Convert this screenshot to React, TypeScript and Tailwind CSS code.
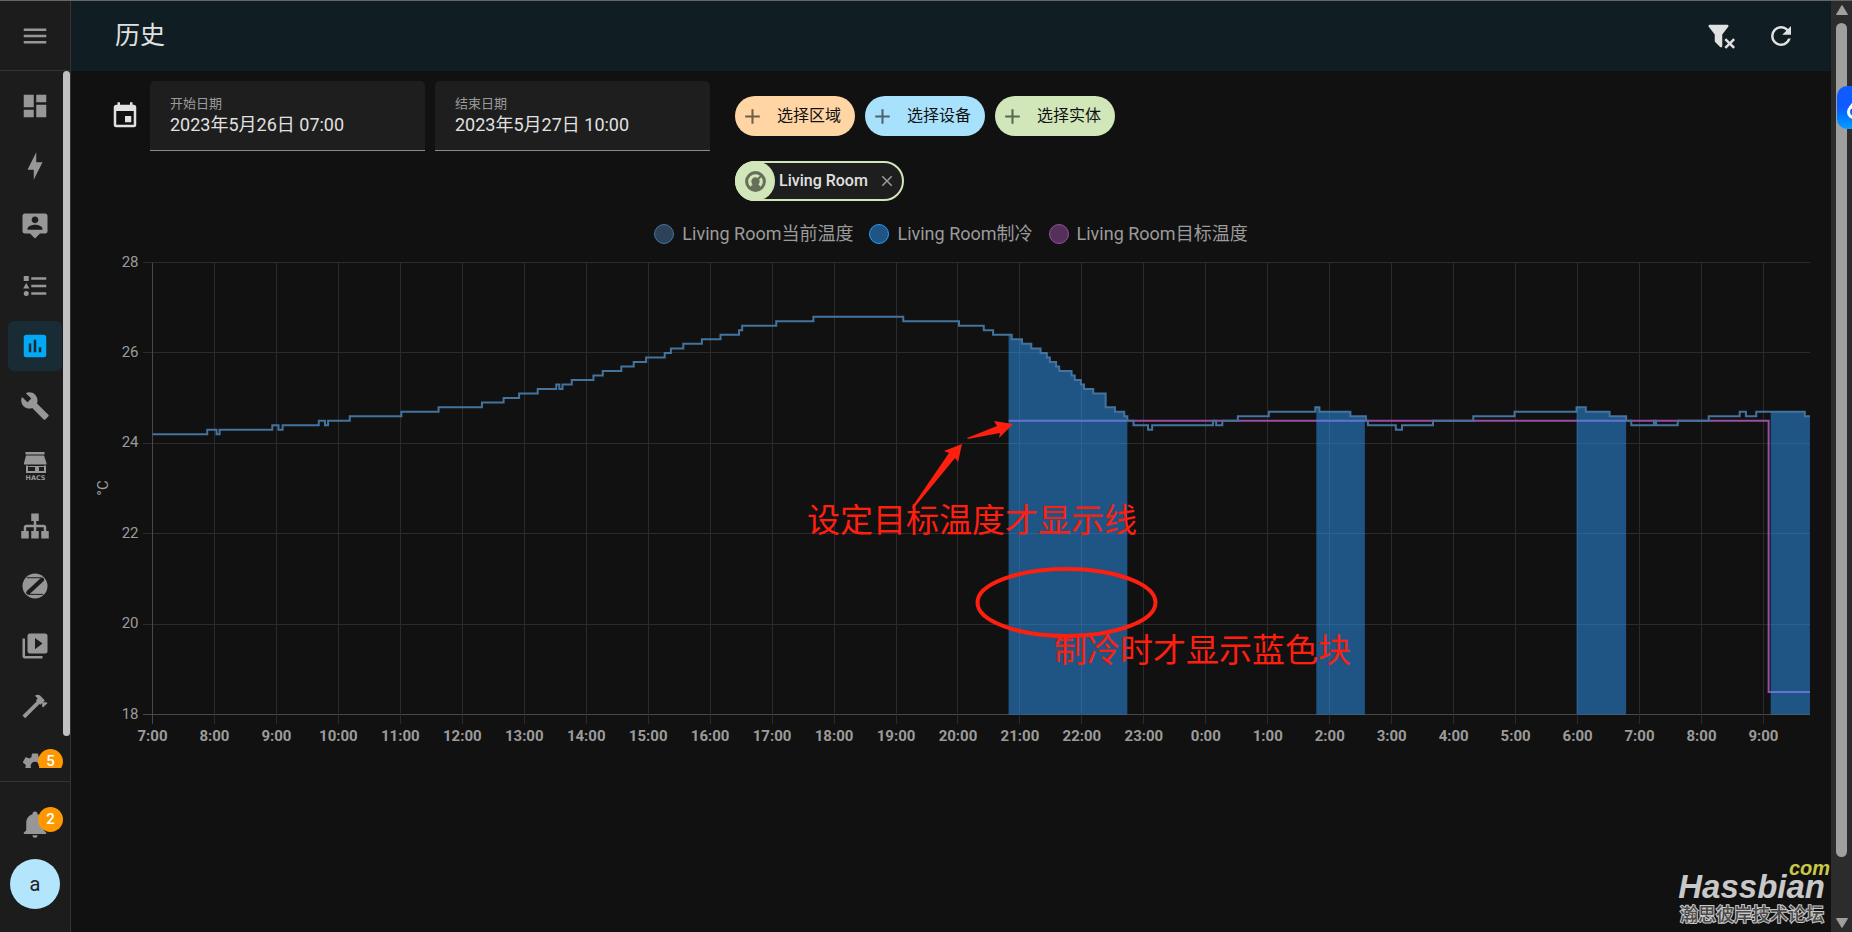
import React from 'react';

const icons = {
  menu: 'M3,6H21V8H3V6M3,11H21V13H3V11M3,16H21V18H3V16Z',
  dashboard: 'M13,3V9H21V3M13,21H21V11H13M3,21H11V15H3M3,13H11V3H3V13Z',
  energy: 'M11 15H6L13 1V9H18L11 23V15Z',
  map: 'M20,2H4A2,2 0 0,0 2,4V16A2,2 0 0,0 4,18H8L12,22L16,18H20A2,2 0 0,0 22,16V4A2,2 0 0,0 20,2M12,4.3C13.5,4.3 14.7,5.5 14.7,7C14.7,8.5 13.5,9.7 12,9.7C10.5,9.7 9.3,8.5 9.3,7C9.3,5.5 10.5,4.3 12,4.3M18,15H6V14.1C6,12.1 10,11 12,11C14,11 18,12.1 18,14.1V15Z',
  logbook: 'M5,9.5L7.5,14H2.5L5,9.5M3,4H7V8H3V4M5,20A2,2 0 0,0 7,18A2,2 0 0,0 5,16A2,2 0 0,0 3,18A2,2 0 0,0 5,20M9,5V7H21V5H9M9,19H21V17H9V19M9,13H21V11H9V13Z',
  history: 'M9,17H7V10H9V17M13,17H11V7H13V17M17,17H15V13H17V17M19,3H5C3.89,3 3,3.89 3,5V19A2,2 0 0,0 5,21H19A2,2 0 0,0 21,19V5C21,3.89 20.1,3 19,3Z',
  wrench: 'M22.7,19L13.6,9.9C14.5,7.6 14,4.9 12.1,3C10.1,1 7.1,0.6 4.7,1.7L9,6L6,9L1.6,4.7C0.4,7.1 0.9,10.1 2.9,12.1C4.8,14 7.5,14.5 9.8,13.6L18.9,22.7C19.3,23.1 19.9,23.1 20.3,22.7L22.6,20.4C23.1,20 23.1,19.3 22.7,19Z',
  sitemap: 'M9,2V8H11V11H5C3.89,11 3,11.89 3,13V16H1V22H7V16H5V13H11V16H9V22H15V16H13V13H19V16H17V22H23V16H21V13C21,11.89 20.11,11 19,11H13V8H15V2H9Z',
  media: 'M4,6H2V20A2,2 0 0,0 4,22H18V20H4V6M20,2H8A2,2 0 0,0 6,4V16A2,2 0 0,0 8,18H20A2,2 0 0,0 22,16V4A2,2 0 0,0 20,2M12,14.5V5.5L18,10L12,14.5Z',
  hammer: 'M2,19.63L13.43,8.2L12.72,7.5L14.14,6.07L12,3.89C13.2,2.7 15.09,2.7 16.27,3.89L19.87,7.5L18.45,8.91H21.29L22,9.62L18.45,13.21L17.74,12.5V9.62L16.27,11.04L15.56,10.33L4.13,21.76L2,19.63Z',
  cog: 'M12,15.5A3.5,3.5 0 0,1 8.5,12A3.5,3.5 0 0,1 12,8.5A3.5,3.5 0 0,1 15.5,12A3.5,3.5 0 0,1 12,15.5M19.43,12.97C19.47,12.65 19.5,12.33 19.5,12C19.5,11.67 19.47,11.34 19.43,11L21.54,9.37C21.73,9.22 21.78,8.95 21.66,8.73L19.66,5.27C19.54,5.05 19.27,4.96 19.05,5.05L16.56,6.05C16.04,5.66 15.5,5.32 14.87,5.07L14.5,2.42C14.46,2.18 14.25,2 14,2H10C9.75,2 9.54,2.18 9.5,2.42L9.13,5.07C8.5,5.32 7.96,5.66 7.44,6.05L4.95,5.05C4.73,4.96 4.46,5.05 4.34,5.27L2.34,8.73C2.21,8.95 2.27,9.22 2.46,9.37L4.57,11C4.53,11.34 4.5,11.67 4.5,12C4.5,12.33 4.53,12.65 4.57,12.97L2.46,14.63C2.27,14.78 2.21,15.05 2.34,15.27L4.34,18.73C4.46,18.95 4.73,19.03 4.95,18.95L7.44,17.94C7.96,18.34 8.5,18.68 9.13,18.93L9.5,21.58C9.54,21.82 9.75,22 10,22H14C14.25,22 14.46,21.82 14.5,21.58L14.87,18.93C15.5,18.67 16.04,18.34 16.56,17.94L19.05,18.95C19.27,19.03 19.54,18.95 19.66,18.73L21.66,15.27C21.78,15.05 21.73,14.78 21.54,14.63L19.43,12.97Z',
  bell: 'M21,19V20H3V19L5,17V11C5,7.9 7.03,5.17 10,4.29C10,4.19 10,4.1 10,4A2,2 0 0,1 12,2A2,2 0 0,1 14,4C14,4.1 14,4.19 14,4.29C16.97,5.17 19,7.9 19,11V17L21,19M14,21A2,2 0 0,1 12,23A2,2 0 0,1 10,21',
  calendar: 'M19,19H5V8H19M16,1V3H8V1H6V3H5C3.89,3 3,3.89 3,5V19A2,2 0 0,0 5,21H19A2,2 0 0,0 21,19V5C21,3.89 20.1,3 19,3H18V1M17,12H12V17H17V12Z',
  filterRemove: 'M14.73,20.83L17.58,18L14.73,15.17L16.15,13.76L19,16.57L21.8,13.76L23.22,15.17L20.41,18L23.22,20.83L21.8,22.24L19,19.4L16.15,22.24L14.73,20.83M13,19.88C13.04,20.18 12.94,20.5 12.71,20.71C12.32,21.1 11.69,21.1 11.3,20.71L7.29,16.7C7.06,16.47 6.96,16.16 7,15.87V10.75L2.21,4.62C1.87,4.19 1.95,3.56 2.38,3.22C2.57,3.08 2.78,3 3,3H17C17.22,3 17.43,3.08 17.62,3.22C18.05,3.56 18.13,4.19 17.79,4.62L13,10.75V19.88Z',
  refresh: 'M17.65,6.35C16.2,4.9 14.21,4 12,4A8,8 0 0,0 4,12A8,8 0 0,0 12,20C15.73,20 18.84,17.45 19.73,14H17.65C16.83,16.33 14.61,18 12,18A6,6 0 0,1 6,12A6,6 0 0,1 12,6C13.66,6 15.14,6.69 16.22,7.78L13,11H20V4L17.65,6.35Z',
  plus: 'M19,13H13V19H11V13H5V11H11V5H13V11H19V13Z',
  close: 'M19,6.41L17.59,5L12,10.59L6.41,5L5,6.41L10.59,12L5,17.59L6.41,19L12,13.41L17.59,19L19,17.59L13.41,12L19,6.41Z',
  thermostat: 'M16.95,16.95L14.83,14.83C15.55,14.1 16,13.1 16,12C16,11.26 15.79,10.57 15.43,10L17.6,7.81C18.5,9 19,10.43 19,12C19,13.93 18.22,15.68 16.95,16.95M12,5C13.57,5 15,5.5 16.19,6.4L14,8.56C13.43,8.21 12.74,8 12,8A4,4 0 0,0 8,12C8,13.1 8.45,14.1 9.17,14.83L7.05,16.95C5.78,15.68 5,13.93 5,12A7,7 0 0,1 12,5M12,2A10,10 0 0,0 2,12A10,10 0 0,0 12,22A10,10 0 0,0 22,12A10,10 0 0,0 12,2Z',
};

const Icon: React.FC<{ path: string; className?: string }> = ({ path, className = 'size-[30px]' }) => (
  <svg viewBox="0 0 24 24" fill="currentColor" className={className} aria-hidden="true">
    <path d={path} />
  </svg>
);

const HacsIcon = () => (
  <svg viewBox="0 0 30 30" fill="currentColor" className="size-[30px]" aria-hidden="true">
    <path d="M5.500 1H24.500V3.500H5.500ZM6 4.500H24L26.500 12V13.500H4V12ZM6 14.500H8V20H15V15H17V20H24V14.500H26V22H6ZM8.500 15H15V16H8.500ZM18 15H24V16H18V20H17V15Z" />
    <path d="M15 15h4v6h-4z" />
    <text x="15.500" y="29" textAnchor="middle" fontSize="6.500" fontWeight="700" className="[font-family:'DejaVu_Sans',sans-serif]">HACS</text>
  </svg>
);

const ZigbeeIcon = () => (
  <svg viewBox="0 0 24 24" className="size-[30px]" aria-hidden="true">
    <circle cx="12" cy="12" r="10" fill="currentColor" />
    <path d="M5.500 5.400H17M7 18.700H18.500" stroke="#1c1c1c" strokeWidth="0.800" />
    <path d="M17.600 7L6.600 17.200" stroke="#1c1c1c" strokeWidth="3.400" strokeLinecap="round" />
  </svg>
);

const navItems = [
  { label: '概览', icon: <Icon path={icons.dashboard} /> },
  { label: '能源', icon: <Icon path={icons.energy} /> },
  { label: '地图', icon: <Icon path={icons.map} /> },
  { label: '日志', icon: <Icon path={icons.logbook} /> },
  { label: '历史', icon: <Icon path={icons.history} />, active: true },
  { label: '工具', icon: <Icon path={icons.wrench} /> },
  { label: 'HACS', icon: <HacsIcon /> },
  { label: '网络', icon: <Icon path={icons.sitemap} /> },
  { label: 'Zigbee', icon: <ZigbeeIcon /> },
  { label: '媒体', icon: <Icon path={icons.media} /> },
  { label: '开发者工具', icon: <Icon path={icons.hammer} /> },
  { label: '配置', icon: <Icon path={icons.cog} />, badge: 5 },
];

const Badge: React.FC<{ value: number }> = ({ value }) => (
  <span className="absolute -right-px top-2 flex size-[25px] items-center justify-center rounded-full bg-[#ff9800] text-[15px] font-medium text-white">
    {value}
  </span>
);

const Sidebar = () => (
  <aside className="flex h-full w-[71px] shrink-0 flex-col border-r border-[#333] bg-[#1c1c1c] text-[#979797]">
    <div className="flex h-[70px] shrink-0 items-center justify-center border-b border-[#333]">
      <button type="button" aria-label="菜单">
        <Icon path={icons.menu} />
      </button>
    </div>
    <nav className="relative mb-[13px] min-h-0 flex-1 overflow-hidden">
      <div className="flex flex-col gap-[10px] pt-[10px] pl-2">
        {navItems.map((item) => (
          <a
            key={item.label}
            href="#"
            aria-label={item.label}
            className={`relative flex h-[50px] w-[54px] shrink-0 items-center justify-center rounded-md ${
              item.active ? 'bg-[#192b34] text-[#03a9f4]' : ''
            }`}
          >
            {item.icon}
            {item.badge && <Badge value={item.badge} />}
          </a>
        ))}
      </div>
      <div className="absolute top-0 right-0 bottom-8 w-[7px] rounded-full bg-[#c1c1c1]" />
    </nav>
    <div className="flex shrink-0 flex-col gap-[10px] border-t border-[#333] px-2 pt-[17px] pb-[23px]">
      <a href="#" aria-label="通知" className="relative flex h-[50px] w-[54px] items-center justify-center">
        <Icon path={icons.bell} />
        <Badge value={2} />
      </a>
      <a href="#" className="ml-[2px] flex size-[50px] items-center justify-center rounded-full bg-[#b3e5fc] text-xl text-[#212121]">
        a
      </a>
    </div>
  </aside>
);

const DateField: React.FC<{ id: string; label: string; value: string }> = ({ id, label, value }) => (
  <div className="flex h-[70px] w-[275px] flex-col rounded-t-[5px] border-b border-[#8a8a8a] bg-[#1e1e1e] px-5 pt-[14px]">
    <label htmlFor={id} className="text-[13px] leading-[18px] text-[#9b9b9b]">{label}</label>
    <input id={id} defaultValue={value} className="w-full bg-transparent text-lg leading-[24px] text-[#e1e1e1] outline-none" />
  </div>
);

const pickers = [
  { label: '选择区域', color: 'bg-[#ffd5a4]' },
  { label: '选择设备', color: 'bg-[#a8e1fc]' },
  { label: '选择实体', color: 'bg-[#d2e7b9]' },
];

const legend = [
  { label: 'Living Room当前温度', color: 'border-[#44739e] bg-[#2b4258]' },
  { label: 'Living Room制冷', color: 'border-[#2b9af9] bg-[#1e5585]' },
  { label: 'Living Room目标温度', color: 'border-[#984ea3] bg-[#55305a]' },
];

// [minutes since 7:00, °C]
type Point = [number, number];

const current: Point[] = [
  [0, 24.2], [53, 24.3], [62, 24.2], [65, 24.3], [116, 24.4], [122, 24.3], [126, 24.4], [161, 24.5],
  [167, 24.4], [170, 24.5], [191, 24.6], [241, 24.7], [277, 24.8], [319, 24.9], [340, 25.0], [355, 25.1],
  [373, 25.2], [391, 25.3], [394, 25.2], [397, 25.3], [406, 25.4], [427, 25.5], [436, 25.6], [454, 25.7],
  [466, 25.8], [478, 25.9], [496, 26.0], [502, 26.1], [514, 26.2], [532, 26.3], [550, 26.4], [568, 26.5],
  [571, 26.6], [604, 26.7], [640, 26.8], [727, 26.7], [781, 26.6], [805, 26.5], [814, 26.4], [832, 26.3],
  [842, 26.2], [851, 26.1], [860, 26.0], [866, 25.9], [869, 25.8], [875, 25.7], [878, 25.6], [890, 25.5],
  [893, 25.4], [899, 25.3], [902, 25.2], [911, 25.1], [923, 24.8], [932, 24.7], [941, 24.6], [944, 24.5],
  [950, 24.4], [964, 24.3], [968, 24.4], [1027, 24.5], [1030, 24.4], [1036, 24.5], [1051, 24.6], [1081, 24.7],
  [1126, 24.8], [1130, 24.7], [1160, 24.6], [1175, 24.5], [1177, 24.4], [1204, 24.3], [1210, 24.4], [1240, 24.5],
  [1279, 24.6], [1319, 24.7], [1379, 24.8], [1388, 24.7], [1411, 24.6], [1427, 24.5], [1432, 24.4], [1454, 24.5],
  [1456, 24.4], [1477, 24.5], [1507, 24.6], [1537, 24.7], [1543, 24.6], [1553, 24.7], [1600, 24.6], [1605, 24.6],
];

const target: Point[] = [[829, 24.5], [1565, 18.5], [1605, 18.5]];

const cooling: [number, number][] = [[829, 944], [1127, 1174], [1379, 1427], [1567, 1605]];

const LEFT = 81.5;
const RIGHT = 1739;
const TOP = 17.5;
const BOTTOM = 469.5;

const toX = (min: number) => LEFT + (min * 61.96) / 60;
const toY = (temp: number) => BOTTOM - (temp - 18) * 45.2;

const stepPath = (points: Point[]) =>
  points
    .map(([min, temp], i) => (i === 0 ? `M${toX(min)},${toY(temp)}` : `H${toX(min)}V${toY(temp)}`))
    .join('');

const areaPath = (from: number, to: number) => {
  const inside = current.filter(([min]) => min > from && min < to);
  const start = current.filter(([min]) => min <= from).pop() as Point;
  return `M${toX(from)},${BOTTOM}V${toY(start[1])}${inside
    .map(([min, temp]) => `H${toX(min)}V${toY(temp)}`)
    .join('')}H${toX(to)}V${BOTTOM}Z`;
};

const hours = Array.from({ length: 27 }, (_, i) => i);
const temps = [28, 26, 24, 22, 20, 18];

const HistoryChart = () => (
  <svg viewBox="0 0 1760 510" className="h-auto w-full" role="img" aria-label="Living Room">
    {/* Grid */}
    <g shapeRendering="crispEdges" stroke="#2b2b2b">
      {temps.map((t) => (
        <line key={t} x1={LEFT - 10} x2={RIGHT} y1={toY(t)} y2={toY(t)} stroke={t === 18 ? '#484848' : '#2b2b2b'} />
      ))}
      {hours.map((h) => (
        <line key={h} x1={toX(h * 60)} x2={toX(h * 60)} y1={TOP} y2={BOTTOM + 9} stroke={h === 0 ? '#484848' : '#2b2b2b'} />
      ))}
    </g>

    {/* Axis labels */}
    <g fill="#9b9b9b" fontSize="15">
      {temps.map((t) => (
        <text key={t} x={LEFT - 14} y={toY(t) + 4} textAnchor="end">{t}</text>
      ))}
      {hours.map((h) => (
        <text key={h} x={toX(h * 60)} y="496" textAnchor="middle" fontWeight="700">{`${(h + 7) % 24}:00`}</text>
      ))}
      <text transform="translate(37 243) rotate(-90)" textAnchor="middle">°C</text>
    </g>

    {/* Series */}
    <path d={stepPath(target)} fill="none" stroke="#984ea3" strokeWidth="2" />
    {cooling.map(([from, to]) => (
      <path key={from} d={areaPath(from, to)} fill="#2b9af9" fillOpacity="0.5" />
    ))}
    <path d={stepPath(current)} fill="none" stroke="#44739e" strokeWidth="2" />

    {/* Annotations */}
    <g fill="#ff1f0f">
      <path d="M891,199L873,206L878,208L841,262L842,264L884,213L887,217Z" />
      <path d="M942,179L923,176L926,181L896,193L897,194L929,188L928,193Z" />
      <ellipse cx="995.500" cy="357.500" rx="89" ry="33.500" fill="none" stroke="#ff1f0f" strokeWidth="4" />
      <g fontSize="33" className="[font-family:'Noto_Sans_CJK_SC',sans-serif]">
        <text x="736" y="287">设定目标温度才显示线</text>
        <text x="983" y="417">制冷时才显示蓝色块</text>
      </g>
    </g>
  </svg>
);

const Watermark = () => (
  <div className="absolute right-px bottom-[5px] flex flex-col items-end [font-family:'Liberation_Sans','Noto_Sans_CJK_SC',sans-serif]">
    <span className="text-xl leading-[18px] font-bold text-[#c9c945] italic">com</span>
    <span className="mr-[5px] text-[33px] leading-[20px] font-bold text-[#c8c8c8] italic">Hassbian</span>
    <span className="mt-[6px] mr-[6px] text-lg leading-[24px] font-medium text-[#4a4a4a] [-webkit-text-stroke:2px_#c8c8c8] [paint-order:stroke_fill]">
      瀚思彼岸技术论坛
    </span>
  </div>
);

const PageScrollbar = () => (
  <div className="relative flex w-[21px] shrink-0 flex-col items-center justify-between bg-[#2c2c2c] py-1">
    <svg viewBox="0 0 12 10" className="h-[10px] w-3" aria-hidden="true">
      <path d="M6 0.500L11.500 9.500H0.500Z" fill="#9f9f9f" stroke="#9f9f9f" strokeLinejoin="round" />
    </svg>
    <div className="mt-2 mb-[61px] w-[11px] flex-1 rounded-full bg-[#9f9f9f]" />
    <svg viewBox="0 0 12 10" className="h-[10px] w-3" aria-hidden="true">
      <path d="M6 9.500L11.500 0.500H0.500Z" fill="#9f9f9f" stroke="#9f9f9f" strokeLinejoin="round" />
    </svg>
    {/* Docked browser extension button */}
    <button
      type="button"
      aria-label="扩展"
      className="absolute top-[85px] right-0 flex h-[43px] w-[15px] justify-end overflow-hidden rounded-l-[10px] bg-linear-to-b from-[#0f5bff] from-50% to-[#0c9dff]"
    >
      <svg viewBox="0 0 5 43" className="h-[43px] w-[5px]" fill="none" stroke="#fff" strokeWidth="3" aria-hidden="true">
        <circle cx="7" cy="26" r="5.500" />
        <path d="M3 22L7 17" />
      </svg>
    </button>
  </div>
);

const App: React.FC = () => {
  return (
    <div className="relative flex h-screen overflow-hidden border-t border-[#666] bg-[#111] text-[#e1e1e1] [font-family:Roboto,'Noto_Sans_CJK_SC',sans-serif]">
      <Sidebar />

      <main className="relative min-w-0 flex-1">
        <header className="flex h-[70px] items-center bg-[#101e24] pr-5 pl-11">
          <h1 className="flex-1 text-[25px]">历史</h1>
          <button type="button" aria-label="清除筛选" className="flex size-[60px] items-center justify-center">
            <Icon path={icons.filterRemove} />
          </button>
          <button type="button" aria-label="刷新" className="flex size-[60px] items-center justify-center">
            <Icon path={icons.refresh} />
          </button>
        </header>

        {/* Filters */}
        <div className="flex items-start gap-[25px] pt-[10px] pl-[39px]">
          <div className="flex items-center gap-[10px]">
            <Icon path={icons.calendar} />
            <DateField id="start-date" label="开始日期" value="2023年5月26日 07:00" />
            <DateField id="end-date" label="结束日期" value="2023年5月27日 10:00" />
          </div>
          <div className="flex flex-col items-start gap-[25px] pt-[15px]">
            <div className="flex gap-[10px]">
              {pickers.map((picker) => (
                <button
                  key={picker.label}
                  type="button"
                  className={`flex h-10 w-[120px] items-center gap-3 rounded-full pl-[5px] text-base text-[#111] ${picker.color}`}
                >
                  <Icon path={icons.plus} className="size-[25px] opacity-60" />
                  {picker.label}
                </button>
              ))}
            </div>
            <div className="flex h-10 items-center rounded-full border-2 border-[#d2e7b9] bg-[#1e1e1e] pr-[6px] text-base font-medium">
              <span className="-my-[2px] -ml-[2px] flex size-10 items-center justify-center rounded-full bg-[#d2e7b9] text-[#656f59]">
                <Icon path={icons.thermostat} className="size-[25px]" />
              </span>
              <span className="pr-[10px] pl-1">Living Room</span>
              <button type="button" aria-label="移除 Living Room" className="text-[#9b9b9b]">
                <Icon path={icons.close} className="size-[18px]" />
              </button>
            </div>
          </div>
        </div>

        {/* Legend */}
        <div className="mt-[22px] flex justify-center gap-4">
          {legend.map((item) => (
            <button key={item.label} type="button" className="flex items-center gap-2 text-lg leading-[22px] text-[#9b9b9b]">
              <span className={`size-5 rounded-full border ${item.color}`} />
              {item.label}
            </button>
          ))}
        </div>

        <HistoryChart />
        <Watermark />
      </main>

      <PageScrollbar />
    </div>
  );
};

export default App;
